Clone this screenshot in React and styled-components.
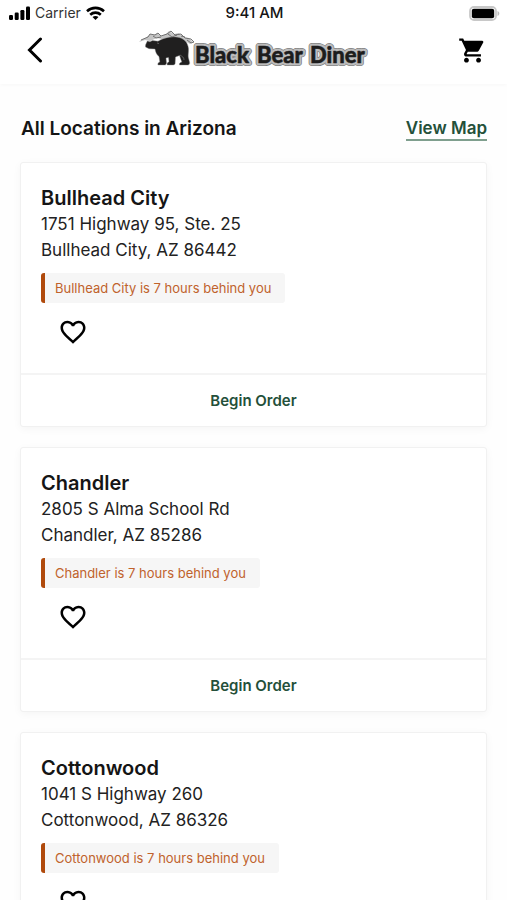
import React from "react";
import styled, { createGlobalStyle } from "styled-components";
import { MdFavoriteBorder, MdShoppingCart } from "react-icons/md";

const GlobalStyle = createGlobalStyle`
  * { box-sizing: border-box; }
  html { scrollbar-width: none; }
  body {
    margin: 0;
    background: #fefefe;
    color: #151515;
    font-family: Inter, "Liberation Sans", sans-serif;
  }
  button { font: inherit; color: inherit; background: none; border: 0; padding: 0; cursor: pointer; }
`;

const Screen = styled.div`
  min-height: 100vh;
`;

const TopArea = styled.header`
  position: sticky;
  top: 0;
  z-index: 1;
  background: #fff;
  box-shadow: 0 1px 4px rgba(0, 0, 0, 0.03);
`;

const StatusBar = styled.div`
  display: grid;
  grid-template-columns: 1fr auto 1fr;
  align-items: center;
  height: 26px;
  padding: 0 7px 0 9px;
  font-size: 14px;
  line-height: 26px;
`;

const Carrier = styled.div`
  display: flex;
  align-items: center;
  gap: 5px;
  color: #333;
`;

const Clock = styled.time`
  font-weight: 500;
  font-size: 15px;
`;

const BatterySlot = styled.div`
  display: flex;
  justify-content: flex-end;
`;

const NavBar = styled.nav`
  display: grid;
  grid-template-columns: 1fr auto 1fr;
  align-items: center;
  height: 58px;
  padding: 0 20px 10px;
`;

const NavButton = styled.button`
  display: flex;
  align-items: center;
  justify-content: center;
  width: 30px;
  height: 40px;
  justify-self: ${(p) => p.$side};
`;

const Logo = styled.svg`
  display: block;
  width: 232px;
  height: 44px;
`;

const LogoWords = styled.text`
  font-family: Lato, "Open Sans", sans-serif;
  font-weight: 900;
  font-size: 22px;
`;

const Main = styled.main`
  padding: 30px 20px 20px;
`;

const Heading = styled.div`
  display: flex;
  justify-content: space-between;
  align-items: center;
  margin-bottom: 18px;
  padding: 0 0 0 1px;
`;

const Title = styled.h1`
  margin: 0;
  font-size: 19px;
  font-weight: 600;
  line-height: 30px;
`;

const MapLink = styled.a`
  color: #24503a;
  font-size: 17px;
  font-weight: 600;
  line-height: 22px;
  text-decoration: none;
  border-bottom: 2px solid #7f9f8e;
`;

const List = styled.ul`
  list-style: none;
  margin: 0;
  padding: 0;
  display: flex;
  flex-direction: column;
  gap: 20px;
`;

const Card = styled.li`
  background: #fff;
  border: 1px solid #f1f1f1;
  border-radius: 3px;
  box-shadow: 0 2px 8px rgba(0, 0, 0, 0.04);
`;

const CardBody = styled.div`
  display: flex;
  flex-direction: column;
  align-items: flex-start;
  padding: 22px 20px 12px;
`;

const Name = styled.h2`
  margin: 0;
  font-size: 20px;
  font-weight: 600;
  line-height: 26px;
`;

const Address = styled.address`
  font-style: normal;
  font-size: 17px;
  line-height: 26px;
  color: #222;
`;

const Notice = styled.p`
  margin: 10px 0 0;
  padding: 0 14px 0 10px;
  border-left: 4px solid #b04a0c;
  border-radius: 3px;
  background: #f6f6f6;
  color: #c0622c;
  font-size: 13px;
  line-height: 30px;
`;

const Favorite = styled.button`
  display: flex;
  align-items: center;
  justify-content: center;
  width: 64px;
  height: 58px;
`;

const OrderButton = styled.button`
  && {
    display: block;
    width: 100%;
    border-top: 2px solid #f4f4f4;
    color: #24503a;
    font-size: 15px;
    font-weight: 600;
    line-height: 51px;
  }
`;

const locations = [
  { name: "Bullhead City", street: "1751 Highway 95, Ste. 25", city: "Bullhead City, AZ 86442" },
  { name: "Chandler", street: "2805 S Alma School Rd", city: "Chandler, AZ 85286" },
  { name: "Cottonwood", street: "1041 S Highway 260", city: "Cottonwood, AZ 86326" },
];

function Signal() {
  return (
    <svg width="21" height="14" viewBox="0 0 21 14" aria-hidden="true">
      <rect x="0" y="9" width="4" height="5" rx="1.2" />
      <rect x="5.7" y="6.5" width="4" height="7.5" rx="1.2" />
      <rect x="11.4" y="4" width="4" height="10" rx="1.2" />
      <rect x="17" y="0.5" width="4" height="13.5" rx="1.2" />
    </svg>
  );
}

function Wifi() {
  return (
    <svg width="19" height="14" viewBox="0 0 19 14" aria-hidden="true">
      <g fill="none" stroke="#000" strokeWidth="2.6">
        <path d="M1 5.2C5.8.7 13.2.7 18 5.2" />
        <path d="M4.2 8.7c3-2.8 7.6-2.8 10.6 0" />
      </g>
      <path d="M6.5 11c1.7-1.4 4.3-1.4 6 0l-3 3z" />
    </svg>
  );
}

function Battery() {
  return (
    <svg width="31" height="15" viewBox="0 0 31 15" aria-hidden="true">
      <rect x="1" y="1" width="26" height="13" rx="4" fill="#fff" stroke="#c8c8c8" strokeWidth="1.8" />
      <rect x="2.8" y="2.8" width="22.4" height="9.4" rx="2" />
      <path d="M28.5 5c2.4.8 2.4 4.2 0 5z" fill="#bdbdbd" />
    </svg>
  );
}

function LogoLayer({ color, outline }) {
  return (
    <LogoWords y="35" fill={color} stroke={color} strokeWidth={outline}>
      <tspan x="57">Black </tspan>
      <tspan x="119">Bear </tspan>
      <tspan x="172">Diner</tspan>
    </LogoWords>
  );
}

function BrandLogo() {
  return (
    <Logo viewBox="0 0 232 44" role="img" aria-label="Black Bear Diner">
      <path
        d="M3 12C7 10 10 9 12 6l4 1 3-2 4 3 5-2 3-3 5 3 5-1 4 4 6 1 4 4-3 2-7-4-8-1-9 1-9-2-7 3-5-1-6 2z"
        fill="#c4c4c4"
      />
      <path
        d="M3 12l7-3 2-3 5 1 3-2 3 3 6-2 4-3 4 4 6-1 4 4 6 1 3 3-3 1-4-3M15 8l3 2 5-1M30 6l4 3 5-2M43 8l4 1"
        fill="none"
        stroke="#666"
        strokeWidth="0.9"
      />
      <path
        d="M7.500 17l1.800-4 2.700.8 2.500-1.300 5.500.7C25 10 33 8.200 39.500 9.200c6.500 1 10.500 5.300 11 11.300.3 4.500-.8 6.500.1 10l1 3.800c.3 1.600-.4 2.700-2 2.700h-8.100c-.6-1.500.6-2.600 2.300-3L41.500 27.500 37.500 29l-.3 5.200c.1 1.800-.5 2.800-2 2.800h-6c-.4-1.600.3-2.600 1.800-3.200l-.5-4.300-2.500.5.5 4.600c.1 1.600-.5 2.400-2 2.400H20c-.6-1.500.2-2.400 1.800-3l-.8-5.500c-2.500-1.700-3.400-4.200-4-7.500l-6-.3L7.500 19z"
        fill="#201f1f"
        stroke="#8a8a8a"
        strokeWidth="0.4"
      />
      <path d="M42 27c2 1.500 4 2 4 5M19 15l2 .6" fill="none" stroke="#777" strokeWidth="0.7" />
      <g strokeLinejoin="round">
        <LogoLayer color="#808080" outline="6" />
        <LogoLayer color="#bcbcbc" outline="4.600" />
        <LogoLayer color="#1d1d1d" outline="0.5" />
      </g>
    </Logo>
  );
}

function LocationCard({ location }) {
  return (
    <Card>
      <CardBody>
        <Name>{location.name}</Name>
        <Address>
          {location.street}
          <br />
          {location.city}
        </Address>
        <Notice>{location.name} is 7 hours behind you</Notice>
        <Favorite type="button" aria-label={`Favorite ${location.name}`}>
          <MdFavoriteBorder size={30} color="#000" />
        </Favorite>
      </CardBody>
      <OrderButton type="button">Begin Order</OrderButton>
    </Card>
  );
}

export default function App() {
  return (
    <Screen>
      <GlobalStyle />
      <TopArea>
        <StatusBar>
          <Carrier>
            <Signal />
            <span>Carrier</span>
            <Wifi />
          </Carrier>
          <Clock>9:41 AM</Clock>
          <BatterySlot>
            <Battery />
          </BatterySlot>
        </StatusBar>
        <NavBar>
          <NavButton type="button" aria-label="Back" $side="start">
            <svg width="16" height="26" viewBox="0 0 16 26" aria-hidden="true">
              <path d="M13.500 2L2.500 13l11 11" fill="none" stroke="#000" strokeWidth="3" strokeLinecap="round" />
            </svg>
          </NavButton>
          <BrandLogo />
          <NavButton type="button" aria-label="Cart" $side="end">
            <MdShoppingCart size={29} color="#000" />
          </NavButton>
        </NavBar>
      </TopArea>
      <Main>
        <Heading>
          <Title>All Locations in Arizona</Title>
          <MapLink href="#map">View Map</MapLink>
        </Heading>
        <List>
          {locations.map((location) => (
            <LocationCard key={location.name} location={location} />
          ))}
        </List>
      </Main>
    </Screen>
  );
}
